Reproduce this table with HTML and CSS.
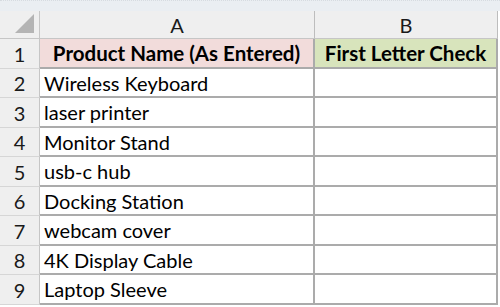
FILE: index.html
```html
<!DOCTYPE html>
<html>
<head>
<meta charset="utf-8">
<link rel="stylesheet" href="styles.css">
</head>
<body>
<div class="topband"></div>
<div class="sheet">
  <div class="corner"><span class="tri"></span></div>
  <div class="colhead">A</div>
  <div class="colhead">B</div>

  <div class="rowhead">1</div>
  <div class="cell hdr pink">Product Name (As Entered)</div>
  <div class="cell hdr green">First Letter Check</div>

  <div class="rowhead">2</div>
  <div class="cell">Wireless Keyboard</div>
  <div class="cell"></div>

  <div class="rowhead">3</div>
  <div class="cell">laser printer</div>
  <div class="cell"></div>

  <div class="rowhead">4</div>
  <div class="cell">Monitor Stand</div>
  <div class="cell"></div>

  <div class="rowhead">5</div>
  <div class="cell">usb-c hub</div>
  <div class="cell"></div>

  <div class="rowhead">6</div>
  <div class="cell">Docking Station</div>
  <div class="cell"></div>

  <div class="rowhead">7</div>
  <div class="cell">webcam cover</div>
  <div class="cell"></div>

  <div class="rowhead">8</div>
  <div class="cell">4K Display Cable</div>
  <div class="cell"></div>

  <div class="rowhead">9</div>
  <div class="cell">Laptop Sleeve</div>
  <div class="cell"></div>
</div>
</body>
</html>
```
FILE: styles.css
```css
* { box-sizing: border-box; }
html, body {
  margin: 0;
  padding: 0;
  background: #ffffff;
  width: 500px;
  height: 307px;
  overflow: hidden;
  font-family: Lato, "Open Sans", "Liberation Sans", sans-serif;
}
.topband {
  height: 11px;
  background: #eaeef2;
  border-top: 1px dotted #d6dbe0;
}
.sheet {
  display: grid;
  grid-template-columns: 40px 275px 183px;
  grid-template-rows: 28px 30px 29px 30px 29px 30px 29px 30px 29px 30px;
}
.corner {
  background: #efefef;
  border-right: 1px solid #c6c6c6;
  border-bottom: 1px solid #c6c6c6;
  position: relative;
}
.tri {
  position: absolute;
  right: 5px;
  bottom: 5px;
  width: 0;
  height: 0;
  border-left: 19px solid transparent;
  border-bottom: 19px solid #b4b4b4;
}
.colhead {
  background: #efefef;
  border-right: 1px solid #bdbdbd;
  border-bottom: 1px solid #c6c6c6;
  display: flex;
  align-items: center;
  justify-content: center;
  font-size: 20px;
  color: #1a1a1a;
  padding-top: 1px;
}
.rowhead {
  background: #efefef;
  border-right: 1px solid #c6c6c6;
  border-bottom: 1px solid #d6d6d6;
  display: flex;
  align-items: center;
  justify-content: center;
  font-size: 20px;
  color: #1a1a1a;
}
.cell {
  border-right: 2px solid #ababab;
  border-bottom: 2px solid #ababab;
  display: flex;
  align-items: center;
  padding-left: 4px;
  font-size: 20px;
  color: #000000;
  white-space: nowrap;
  overflow: hidden;
}
.hdr {
  font-weight: bold;
  font-size: 20.5px;
  justify-content: center;
  padding-left: 0;
}
.pink { background: #f2dcdb; }
.green { background: #d8e4bc; }
```
